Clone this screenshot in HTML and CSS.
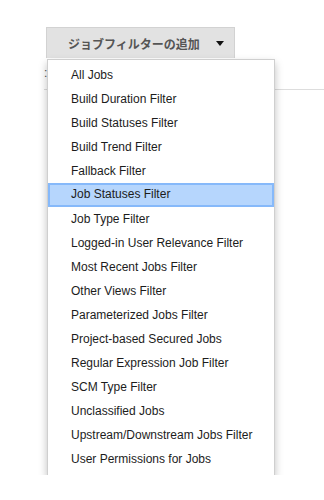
FILE: index.html
```html
<!DOCTYPE html>
<html lang="ja">
<head>
  <meta charset="UTF-8">
  <title>ジョブフィルターの追加</title>
  <link rel="stylesheet" href="styles.css">
</head>
<body>
  <div class="page">
    <div class="dropdown">
      <button class="add-btn">
        <span class="add-label">ジョブフィルターの追加</span>
        <span class="caret"></span>
      </button>
      <ul class="menu">
        <li class="menu-item">All Jobs</li>
        <li class="menu-item">Build Duration Filter</li>
        <li class="menu-item">Build Statuses Filter</li>
        <li class="menu-item">Build Trend Filter</li>
        <li class="menu-item">Fallback Filter</li>
        <li class="menu-item active">Job Statuses Filter</li>
        <li class="menu-item">Job Type Filter</li>
        <li class="menu-item">Logged-in User Relevance Filter</li>
        <li class="menu-item">Most Recent Jobs Filter</li>
        <li class="menu-item">Other Views Filter</li>
        <li class="menu-item">Parameterized Jobs Filter</li>
        <li class="menu-item">Project-based Secured Jobs</li>
        <li class="menu-item">Regular Expression Job Filter</li>
        <li class="menu-item">SCM Type Filter</li>
        <li class="menu-item">Unclassified Jobs</li>
        <li class="menu-item">Upstream/Downstream Jobs Filter</li>
        <li class="menu-item">User Permissions for Jobs</li>
      </ul>
    </div>
    <div class="below">
      <div class="below-text">:</div>
      <div class="below-rule"></div>
      <div class="below-fill"></div>
      <div class="handle"></div>
    </div>
  </div>
</body>
</html>
```

FILE: styles.css
```css
* { box-sizing: border-box; }
body {
  margin: 0;
  background: #fff;
  font-family: 'Liberation Sans', Arial, sans-serif;
}
.page {
  padding: 27px 0 0 46px;
}
.dropdown {
  position: relative;
  width: 189px;
}
.add-btn {
  display: flex;
  align-items: center;
  width: 189px;
  height: 31px;
  padding: 0 0 0 21px;
  background: #e2e2e2;
  border: 1px solid #d2d2d2;
  border-bottom: none;
  color: #555;
  font-family: 'Noto Sans CJK JP', sans-serif;
  font-size: 12px;
  font-weight: 700;
  cursor: pointer;
}
.caret {
  margin-left: 16px;
  width: 0;
  height: 0;
  border-left: 4px solid transparent;
  border-right: 4px solid transparent;
  border-top: 5px solid #111;
}
.menu {
  position: absolute;
  top: 32px;
  left: 1px;
  z-index: 2;
  width: 228px;
  margin: 0;
  padding: 3px 0 4px;
  list-style: none;
  background: #fff;
  border: 1px solid #cfcfcf;
  box-shadow: 0 4px 8px rgba(0, 0, 0, 0.25);
}
.menu-item {
  height: 24px;
  line-height: 24px;
  padding-left: 23px;
  font-size: 12px;
  color: #1c1c1c;
  white-space: nowrap;
}
.menu-item.active {
  background: #b6d6fd;
  box-shadow: inset 0 0 0 2px #86b9fa;
  line-height: 23px;
}
.below {
  position: relative;
}
.below-text {
  height: 31px;
  padding-top: 8px;
  margin-left: -2px;
  font-size: 12px;
  color: #555;
}
.below-rule {
  border-top: 1px solid #ddd;
  margin-left: -2px;
}
.below-fill {
  height: 384px;
}
.handle {
  width: 11px;
  margin-left: 11px;
  border-top: 1px dotted #aaa;
}
```
